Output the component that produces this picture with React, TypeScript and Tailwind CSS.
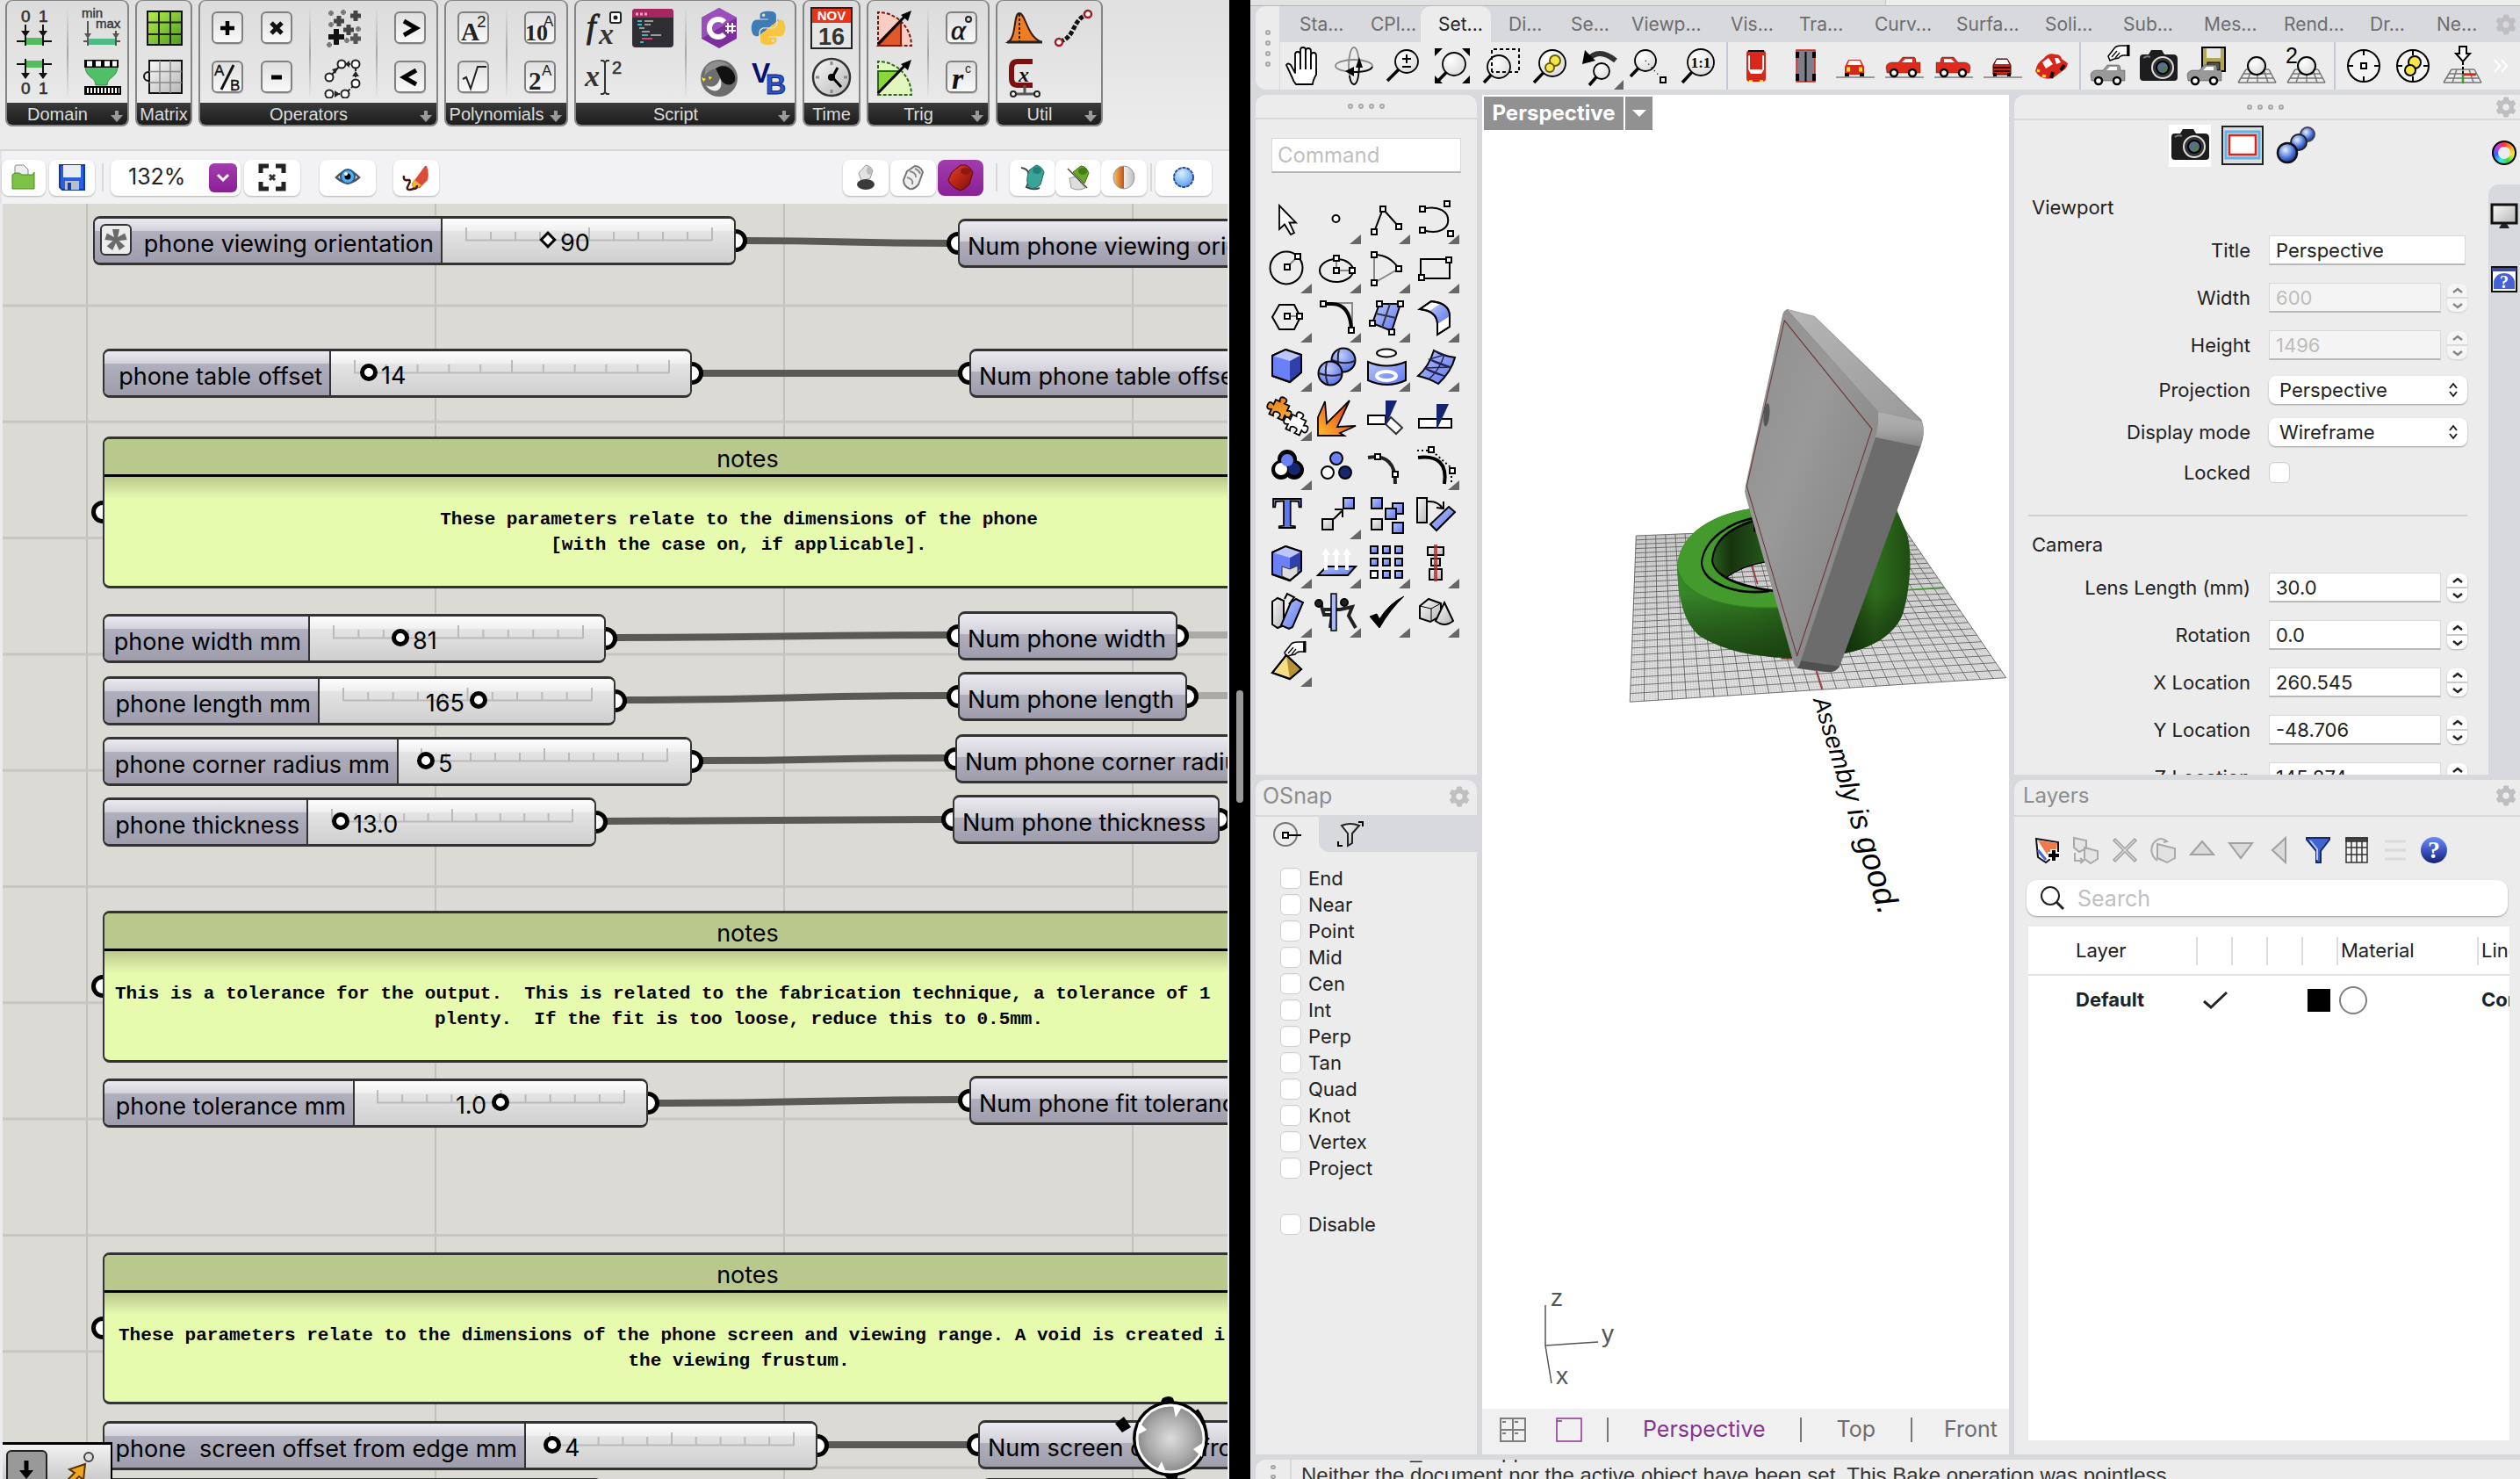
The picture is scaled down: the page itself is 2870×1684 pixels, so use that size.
import React from "react";
import { FaCog, FaPython } from "react-icons/fa";

type Kids = { children?: React.ReactNode };

const INTER = "font-['Inter','Liberation_Sans',sans-serif]";
const ARIAL = "font-['Liberation_Sans',Arial,sans-serif]";

/* ---------- drawing helpers ---------- */

function I48({ children }: Kids) {
  return (
    <svg viewBox="0 0 48 48" className="h-12 w-12" fill="none" aria-hidden="true">
      {children}
    </svg>
  );
}

function Sq({ x, y, s = 6 }: { x: number; y: number; s?: number }) {
  return <rect x={x - s / 2} y={y - s / 2} width={s} height={s} fill="#fff" stroke="#000" strokeWidth="2" />;
}

function Lens({ x, y, r, tx, ty }: { x: number; y: number; r: number; tx: number; ty: number }) {
  const d = Math.hypot(tx - x, ty - y);
  return (
    <g>
      <path d={`M${x + ((tx - x) * r) / d} ${y + ((ty - y) * r) / d}L${tx} ${ty}`} stroke="#000" strokeWidth="3.5" />
      <circle cx={x} cy={y} r={r} fill="url(#lensFill)" stroke="#000" strokeWidth="1.8" />
    </g>
  );
}

function Defs() {
  return (
    <svg className="absolute h-0 w-0" aria-hidden="true">
      <defs>
        <radialGradient id="lensFill" cx=".35" cy=".3" r=".9">
          <stop offset="0" stopColor="#fff" />
          <stop offset="1" stopColor="#d4d4d4" />
        </radialGradient>
        <linearGradient id="keyFill" x1="0" y1="0" x2="0" y2="1">
          <stop offset="0" stopColor="#dedede" />
          <stop offset="1" stopColor="#fafafa" />
        </linearGradient>
        <linearGradient id="blueFill" x1="0" y1="0" x2="1" y2="1">
          <stop offset="0" stopColor="#b9c6fa" />
          <stop offset="1" stopColor="#5b76ef" />
        </linearGradient>
        <linearGradient id="greyFill" x1="0" y1="0" x2="1" y2="1">
          <stop offset="0" stopColor="#fafafa" />
          <stop offset="1" stopColor="#b5b5b5" />
        </linearGradient>
        <linearGradient id="greenFill" x1="0" y1="0" x2="1" y2="1">
          <stop offset="0" stopColor="#b7f04a" />
          <stop offset="1" stopColor="#4c9c1c" />
        </linearGradient>
        <linearGradient id="flameFill" x1="1" y1="0" x2="0" y2="1">
          <stop offset="0" stopColor="#e2231a" />
          <stop offset="1" stopColor="#fbc02d" />
        </linearGradient>
        <linearGradient id="jigsawFill" x1="0" y1="0" x2="1" y2="1">
          <stop offset="0" stopColor="#e0741c" />
          <stop offset="1" stopColor="#fbb53a" />
        </linearGradient>
        <linearGradient id="pyFill" x1=".1" y1="0" x2=".9" y2="1">
          <stop offset=".5" stopColor="#3f7cb5" />
          <stop offset=".5" stopColor="#f9c440" />
        </linearGradient>
        <linearGradient id="orangeHalf" x1="0" y1="0" x2="1" y2="0">
          <stop offset="0" stopColor="#f6c16c" />
          <stop offset=".5" stopColor="#c25510" />
          <stop offset=".5" stopColor="#eee" />
          <stop offset="1" stopColor="#bbb" />
        </linearGradient>
        <radialGradient id="skyBall" cx=".4" cy=".3" r=".8">
          <stop offset="0" stopColor="#d9efff" />
          <stop offset="1" stopColor="#4f95e6" />
        </radialGradient>
        <radialGradient id="navyBall" cx=".4" cy=".35" r=".7">
          <stop offset="0" stopColor="#eaf2ff" />
          <stop offset=".6" stopColor="#4a74d8" />
          <stop offset="1" stopColor="#12257a" />
        </radialGradient>
        <radialGradient id="blueBall" cx=".4" cy=".3" r=".8">
          <stop offset="0" stopColor="#c3cefc" />
          <stop offset="1" stopColor="#4a66e2" />
        </radialGradient>
        <linearGradient id="helpFill" x1="0" y1="0" x2="0" y2="1">
          <stop offset="0" stopColor="#6b8bff" />
          <stop offset="1" stopColor="#12207c" />
        </linearGradient>
        <linearGradient id="redTin" x1="0" y1="0" x2="1" y2="1">
          <stop offset="0" stopColor="#e8402a" />
          <stop offset="1" stopColor="#7d0b04" />
        </linearGradient>
      </defs>
    </svg>
  );
}

/* ---------- ribbon icons ---------- */

function Key({ children }: Kids) {
  return (
    <I48>
      <rect x="8" y="8" width="34" height="35" rx="5" fill="#0002" />
      <rect x="7" y="6" width="34" height="35" rx="5" fill="url(#keyFill)" stroke="#808080" strokeWidth="2" />
      {children}
    </I48>
  );
}

function Bracket01({ flip = false }: { flip?: boolean }) {
  return (
    <I48>
      {flip ? (
        <g>
          <rect x="14" y="5" width="20" height="8" fill="#52bd5c" />
          <path d="M4 9h10M34 9h10M14 3v22M34 3v22" stroke="#111" strokeWidth="2" />
          <path d="M9 19h10l-5 7zM29 19h10l-5 7z" fill="#111" />
        </g>
      ) : (
        <g>
          <rect x="14" y="35" width="20" height="8" fill="#52bd5c" />
          <path d="M4 39h10M34 39h10M14 20v24M34 20v24" stroke="#111" strokeWidth="2" />
          <path d="M9 27h10l-5 7zM29 27h10l-5 7z" fill="#111" />
        </g>
      )}
      <text x="9" y={flip ? 43 : 17} fontSize="19" fontFamily="Liberation Sans" fill="#333" stroke="#333" strokeWidth=".6">0</text>
      <text x="29" y={flip ? 43 : 17} fontSize="19" fontFamily="Liberation Sans" fill="#333" stroke="#333" strokeWidth=".6">1</text>
    </I48>
  );
}

const plus = (x: number, y: number, s: number, w: number, c: string) => (
  <path key={`${x}-${y}`} d={`M${x - s} ${y}H${x + s}M${x} ${y - s}V${y + s}`} stroke={c} strokeWidth={w} />
);

const ribbonIcons = {
  toDomain: <Bracket01 />,
  fromDomain: <Bracket01 flip />,
  minmax: (
    <I48>
      <text x="2" y="12" fontSize="15" fontFamily="Liberation Sans" fill="#333" stroke="#333" strokeWidth=".4">min</text>
      <text x="18" y="24" fontSize="15" fontFamily="Liberation Sans" fill="#333" stroke="#333" strokeWidth=".4">max</text>
      <rect x="9" y="36" width="32" height="7" fill="#4fbb85" />
      <path d="M4 39h5M41 39h5M9 16v28M41 27v17" stroke="#555" strokeWidth="2" />
      <path d="M5 30h8l-4 6zM37 30h8l-4 6z" fill="#555" />
    </I48>
  ),
  remap: (
    <I48>
      <path d="M6 11h37c0 14-12 12-12 22H18c0-10-12-8-12-22z" fill="#4fbf68" stroke="#3b8b4b" />
      <rect x="5" y="4" width="39" height="9" fill="#000" />
      <path d="M8 8.500h6M18 8.500h6M28 8.500h6M37 8.500h5" stroke="#fff" strokeWidth="6" />
      <rect x="5" y="34" width="42" height="10" fill="#000" />
      <path d="M8 39h37" stroke="#fff" strokeWidth="6" strokeDasharray="2 2" />
    </I48>
  ),
  matrix: (
    <I48>
      <rect x="5" y="5" width="39" height="38" fill="url(#greenFill)" stroke="#111" strokeWidth="2" />
      <path d="M18 5v38M31 5v38M5 17.500h39M5 31h39" stroke="#222" strokeWidth="2" />
    </I48>
  ),
  matrixGrey: (
    <I48>
      <path d="M6 18a5 5 0 0 0 0 10" stroke="#111" strokeWidth="2" />
      <rect x="7" y="5" width="37" height="37" fill="url(#greyFill)" stroke="#111" strokeWidth="2" />
      <path d="M19 5v37M31 5v37M7 17.500h37M7 30h37" stroke="#888" strokeWidth="1.500" />
    </I48>
  ),
  add: <Key>{plus(24, 24, 8, 4.5, "#000")}</Key>,
  mul: <Key><path d="M18 18l12 12M30 18L18 30" stroke="#111" strokeWidth="5" /></Key>,
  sub: <Key><path d="M18 24h12" stroke="#000" strokeWidth="5" /></Key>,
  div: (
    <Key>
      <text x="9" y="22" fontSize="17" fontFamily="Liberation Sans" fill="#111" stroke="#111" strokeWidth=".4">A</text>
      <text x="27" y="39" fontSize="17" fontFamily="Liberation Sans" fill="#111" stroke="#111" strokeWidth=".4">B</text>
      <path d="M31 10L17 38" stroke="#111" strokeWidth="3" />
    </Key>
  ),
  mass: (
    <I48>
      {plus(16, 34, 9, 6, "#111")}
      {plus(38, 10, 6, 5, "#444")}
      {plus(19, 16, 6, 5, "#444")}
      {plus(30, 26, 6, 5, "#444")}
      {plus(38, 36, 6, 5, "#555")}
      {plus(10, 7, 3, 3, "#777")}
      {plus(24, 6, 3, 3, "#777")}
      {plus(28, 38, 3, 3, "#777")}
      {plus(8, 43, 3, 3, "#777")}
      {plus(10, 20, 3, 3, "#777")}
      {plus(41, 25, 3, 3, "#777")}
    </I48>
  ),
  series: (
    <I48>
      <path d="M8 43h18L38 31V9H22L8 24" stroke="#222" strokeWidth="2" strokeDasharray="5 2" />
      {[[8, 43], [26, 43], [38, 31], [38, 9], [22, 9], [8, 24]].map(([x, y]) => (
        <circle key={`${x}.${y}`} cx={x} cy={y} r="4.500" fill="#fff" stroke="#222" strokeWidth="2" />
      ))}
      <path d="M14 39l6 4-6 4zM34 23l4-6 4 6zM31 5l-5 4 5 4zM11 15l7-2-3 7z" fill="#222" />
    </I48>
  ),
  gt: <Key><path d="M17 16l14 8-14 8" stroke="#000" strokeWidth="5" /></Key>,
  lt: <Key><path d="M31 16l-14 8 14 8" stroke="#000" strokeWidth="5" /></Key>,
  sqr: (
    <Key>
      <text x="10" y="38" fontSize="29" fontWeight="bold" fontFamily="Liberation Serif" fill="#222">A</text>
      <text x="28" y="23" fontSize="19" fontFamily="Liberation Sans" fill="#222">2</text>
    </Key>
  ),
  sqrt: <Key><path d="M12 26l4-2 5 13 8-25h10" stroke="#222" strokeWidth="2" /></Key>,
  ten: (
    <Key>
      <text x="7" y="38" fontSize="26" fontWeight="bold" fontFamily="Liberation Serif" fill="#222">10</text>
      <text x="28" y="22" fontSize="17" fontFamily="Liberation Sans" fill="#222">A</text>
    </Key>
  ),
  two: (
    <Key>
      <text x="11" y="38" fontSize="29" fontWeight="bold" fontFamily="Liberation Serif" fill="#222">2</text>
      <text x="26" y="22" fontSize="17" fontFamily="Liberation Sans" fill="#222">A</text>
    </Key>
  ),
  fx: (
    <I48>
      <text x="5" y="35" fontSize="38" fontStyle="italic" fontFamily="Liberation Serif" fill="#222" stroke="#222">f</text>
      <text x="19" y="42" fontSize="34" fontStyle="italic" fontWeight="bold" fontFamily="Liberation Serif" fill="#333">x</text>
      <rect x="32" y="6" width="12" height="12" rx="2" fill="#fff" stroke="#222" strokeWidth="2" />
      <circle cx="38" cy="12" r="2.500" fill="#222" />
    </I48>
  ),
  x2: (
    <I48>
      <text x="3" y="34" fontSize="34" fontStyle="italic" fontWeight="bold" fontFamily="Liberation Serif" fill="#333">x</text>
      <text x="34" y="20" fontSize="20" fontFamily="Liberation Sans" fill="#333" stroke="#333" strokeWidth=".6">2</text>
      <path d="M21 5h3l2 2 2-2h3M26 6v36M21 43h3l2-2 2 2h3" stroke="#333" strokeWidth="2" />
    </I48>
  ),
  terminal: (
    <I48>
      <rect x="1" y="2" width="47" height="44" rx="4" fill="#2f2f33" />
      <path d="M1 12V6a4 4 0 0 1 4-4h39a4 4 0 0 1 4 4v6z" fill="#a8265e" />
      <path d="M5 8h3M10 8h3M15 8h3" stroke="#e9a6c4" strokeWidth="3" />
      <path d="M7 16h5M7 20h5M12 32h7M10 40h4" stroke="#3fb4c9" strokeWidth="2" />
      <path d="M15 16h10M15 20h7M12 28h9M22 32h12M9 24h6" stroke="#9a9a9a" strokeWidth="2" />
      <path d="M12 36h12" stroke="#d2487e" strokeWidth="2" />
    </I48>
  ),
  csharp: (
    <I48>
      <path d="M24 1l20 11v24L24 47 4 36V12z" fill="#7b2f9e" />
      <path d="M24 1l20 11L4 36V12z" fill="#9a4fbd" />
      <path d="M30 17a10 10 0 1 0 0 14" stroke="#fff" strokeWidth="6" />
      <path d="M34 18v12M39 18v12M31 22h12M31 27h12" stroke="#fff" strokeWidth="2" />
    </I48>
  ),
  python: (
    <span className="grid h-12 w-12 place-items-center">
      <FaPython className="h-11 w-11 [&_path]:fill-[url(#pyFill)]" aria-hidden="true" />
    </span>
  ),
  moon: (
    <I48>
      <circle cx="24" cy="25" r="21" fill="#6d6d6d" />
      <path d="M9 12q14-12 27-1-10-3-15 3-9 1-14 9z" fill="#8f8f8f" />
      <path d="M20 14a14 14 0 0 1 22 14c-4 8-14 4-16-2z" fill="#111" />
      <path d="M9 33c8 12 22 6 16-8-2 8-8 12-16 8z" fill="#eee" />
      <path d="M4 24l5 2-3 3zM12 23l4 1-3 3z" fill="#ffe81a" />
    </I48>
  ),
  vb: (
    <I48>
      <text x="5" y="30" fontSize="32" fontWeight="bold" fontFamily="Liberation Sans" fill="#07106b">V</text>
      <text x="21" y="43" fontSize="32" fontWeight="bold" fontFamily="Liberation Sans" fill="#2b56cc" stroke="#0d2577">B</text>
    </I48>
  ),
  calendar: (
    <I48>
      <rect x="1" y="1" width="46" height="46" fill="#e6e6e6" stroke="#222" strokeWidth="2" />
      <rect x="2" y="2" width="44" height="16" fill="#e8341b" />
      <text x="24" y="15" fontSize="15" fontWeight="bold" textAnchor="middle" fontFamily="Liberation Sans" fill="#fff">NOV</text>
      <text x="24" y="43" fontSize="27" textAnchor="middle" fontWeight="bold" fontFamily="Liberation Sans" fill="#333">16</text>
    </I48>
  ),
  clock: (
    <I48>
      <circle cx="24" cy="24" r="21" fill="url(#greyFill)" stroke="#333" strokeWidth="2.500" />
      <path d="M24 6v4M24 38v4M6 24h4M38 24h4" stroke="#888" strokeWidth="3" />
      <path d="M31 13l-6 11 10 11" stroke="#000" strokeWidth="3" />
      <circle cx="24" cy="24" r="4" fill="#000" />
    </I48>
  ),
  sine: (
    <I48>
      <path d="M5 44V6a38 38 0 0 1 38 38z" fill="#f9cdc4" stroke="#7d1710" strokeWidth="2" strokeDasharray="4 2" />
      <path d="M5 44h26V16z" fill="#e0592a" stroke="#7d1710" strokeWidth="2" />
      <path d="M5 42L38 8" stroke="#000" strokeWidth="3" />
      <path d="M43 4l-4 12-8-7z" fill="#000" />
    </I48>
  ),
  cosine: (
    <I48>
      <path d="M5 44V6a38 38 0 0 1 38 38z" fill="#e2f7bd" stroke="#2a6a12" strokeWidth="2" strokeDasharray="4 2" />
      <path d="M5 42V17h24z" fill="#8cd63a" stroke="#2a6a12" strokeWidth="2" />
      <path d="M5 42L38 8" stroke="#000" strokeWidth="3" />
      <path d="M43 4l-4 12-8-7z" fill="#000" />
    </I48>
  ),
  alpha: (
    <Key>
      <text x="12" y="37" fontSize="32" fontStyle="italic" fontFamily="Liberation Serif" fill="#111" stroke="#111" strokeWidth=".6">α</text>
      <circle cx="32" cy="14" r="3" stroke="#222" strokeWidth="2" />
    </Key>
  ),
  radian: (
    <Key>
      <text x="13" y="37" fontSize="34" fontStyle="italic" fontWeight="bold" fontFamily="Liberation Serif" fill="#111">r</text>
      <text x="28" y="19" fontSize="14" fontFamily="Liberation Sans" fill="#222">c</text>
    </Key>
  ),
  gauss: (
    <I48>
      <path d="M5 40C15 34 11 7 18 7s8 26 25 33z" fill="#ef7d22" stroke="#3a1a08" strokeWidth="2" />
      <path d="M4 40h40" stroke="#222" strokeWidth="3" />
      <path d="M18 8v31" stroke="#222" strokeWidth="2" strokeDasharray="3 2" />
    </I48>
  ),
  interp: (
    <I48>
      <path d="M8 39C26 36 22 12 40 9" stroke="#111" strokeWidth="5" strokeDasharray="5 2" />
      <circle cx="7" cy="40" r="4" fill="#fff" stroke="#9c1f28" strokeWidth="2.500" />
      <circle cx="40" cy="8" r="4" fill="#fff" stroke="#9c1f28" strokeWidth="2.500" />
    </I48>
  ),
  clamp: (
    <I48>
      <path d="M33 6H16Q9 6 9 14v11q0 8 7 8h17" stroke="#7c0f10" strokeWidth="6" />
      <text x="17" y="29" fontSize="24" fontStyle="italic" fontWeight="bold" fontFamily="Liberation Serif" fill="#111">x</text>
      <path d="M24 33v9M12 43h26" stroke="#555" strokeWidth="3" />
      <circle cx="11" cy="43" r="3" fill="#fff" stroke="#222" strokeWidth="2" />
      <circle cx="38" cy="43" r="3" fill="#fff" stroke="#222" strokeWidth="2" />
    </I48>
  ),
};

type IconName = keyof typeof ribbonIcons;

/* Each ribbon group is a list of columns; null draws a divider. */
const ribbon: { name: string; more: boolean; width: string; cols: (IconName[] | null)[] }[] = [
  { name: "Domain", more: true, width: "w-[141px]", cols: [["toDomain", "fromDomain"], null, ["minmax", "remap"]] },
  { name: "Matrix", more: false, width: "w-[65px]", cols: [["matrix", "matrixGrey"]] },
  { name: "Operators", more: true, width: "w-[273px]", cols: [["add", "div"], ["mul", "sub"], null, ["mass", "series"], null, ["gt", "lt"]] },
  { name: "Polynomials", more: true, width: "w-[141px]", cols: [["sqr", "sqrt"], null, ["ten", "two"]] },
  { name: "Script", more: true, width: "w-[253px]", cols: [["fx", "x2"], ["terminal"], null, ["csharp", "moon"], ["python", "vb"]] },
  { name: "Time", more: false, width: "w-[66px]", cols: [["calendar", "clock"]] },
  { name: "Trig", more: true, width: "w-[140px]", cols: [["sine", "cosine"], null, ["alpha", "radian"]] },
  { name: "Util", more: true, width: "w-[122px]", cols: [["gauss", "clamp"], ["interp"]] },
];

function Ribbon() {
  return (
    <div className="h-[172px] shrink-0 border-b-2 border-[#d6d7d9] bg-[#ebebeb]">
      <div className="flex h-36 gap-[7px] rounded-br-xl bg-linear-to-b from-[#e0e0e0] to-[#ebebeb] pl-1.5">
        {ribbon.map((g) => (
          <section
            key={g.name}
            className={`${g.width} flex shrink-0 flex-col overflow-hidden rounded-lg border-2 border-t border-[#858585] bg-linear-to-b from-[#dcdcdc] to-[#ececec]`}
          >
            <div className="flex h-[116px] justify-center pt-[7px]">
              {g.cols.map((col, i) =>
                col ? (
                  <div key={i} className="flex w-14 shrink-0 flex-col items-center gap-2">
                    {col.map((n) => (
                      <button key={n} type="button" aria-label={n}>
                        {ribbonIcons[n]}
                      </button>
                    ))}
                  </div>
                ) : (
                  <div key={i} className="flex w-5 shrink-0 justify-center">
                    <div className="h-[104px] w-0.5 bg-linear-to-b from-transparent via-[#a8a8a8] to-transparent" />
                  </div>
                )
              )}
            </div>
            <div className={`${ARIAL} flex flex-1 items-center bg-linear-to-b from-[#3b3b3b] to-[#1c1c1c] text-[20px] leading-none text-[#dcdcdc]`}>
              <span className="flex-1 text-center">{g.name}</span>
              {g.more && (
                <svg viewBox="0 0 20 20" className="mt-1 mr-0.5 h-5 w-5 shrink-0" aria-hidden="true">
                  <path d="M8 4h4v5h5l-7 8-7-8h5z" fill="#9a9a9a" />
                </svg>
              )}
            </div>
          </section>
        ))}
      </div>
    </div>
  );
}

/* ---------- canvas toolbar ---------- */

function ToolBtn({ label, className = "w-[52px]", children }: { label: string; className?: string } & Kids) {
  return (
    <button
      type="button"
      aria-label={label}
      className={`${className} grid h-[41px] shrink-0 place-items-center rounded-lg bg-white shadow-[0_1px_2px_#0004]`}
    >
      <svg viewBox="0 0 32 32" className="h-8 w-8" fill="none" aria-hidden="true">
        {children}
      </svg>
    </button>
  );
}

const can = "M9 9l9-6q6 0 9 7l-5 14q-5 6-10 5Q5 26 5 19z";

function CanvasToolbar() {
  return (
    <div className="flex h-[60px] shrink-0 items-center gap-1 border-l-2 border-[#e4e4e8] bg-[#f2f2f4]">
      <ToolBtn label="Open" className="w-[50px]">
        <path d="M6 4q0-2 2-2h8l5 5v9H6z" fill="#eee" stroke="#888" />
        <path d="M3 13l3-2h5l3 2h12l2-3v19H3z" fill="#7cc247" stroke="#4a8a22" />
      </ToolBtn>
      <ToolBtn label="Save">
        <path d="M2 2h28v28H5l-3-3z" fill="#2a5fe0" stroke="#123a9c" strokeWidth="2" />
        <rect x="6" y="2" width="20" height="14" fill="#e9eef5" />
        <rect x="8" y="20" width="16" height="10" fill="#b8bfc9" />
        <rect x="11" y="22" width="4" height="8" fill="#1b3f9f" />
      </ToolBtn>
      <span className="mx-1 h-8 w-0.5 bg-[#d9d9dc]" />
      <div className={`${INTER} relative h-[41px] w-[148px] rounded-lg bg-white shadow-[0_1px_2px_#0004]`}>
        <select aria-label="Zoom" className="h-full w-full appearance-none pl-5 text-[25px] text-[#222]">
          <option>132%</option>
        </select>
        <span className="pointer-events-none absolute top-1 right-1 grid h-[33px] w-8 place-items-center rounded-md bg-linear-to-b from-[#a23cad] to-[#8a1f96]">
          <svg viewBox="0 0 16 16" className="h-4 w-4" fill="none" aria-hidden="true">
            <path d="M2 5l6 6 6-6" stroke="#fff" strokeWidth="3" />
          </svg>
        </span>
      </div>
      <ToolBtn label="Zoom extents" className="w-16">
        <path d="M3 11V3h9M20 3h9v8M29 21v8h-9M12 29H3v-8" stroke="#222" strokeWidth="5" />
        <path d="M13 13l6 6M19 13l-6 6" stroke="#333" strokeWidth="3" />
      </ToolBtn>
      <ToolBtn label="Named views" className="mr-4 ml-[18px] w-16">
        <path d="M3 16Q16 2 29 16 16 28 3 16z" fill="#eee" stroke="#555" strokeWidth="2.500" />
        <circle cx="16" cy="15" r="8" fill="#55aef0" stroke="#245a8c" strokeWidth="2" />
        <circle cx="16" cy="15" r="3.500" fill="#000" />
        <circle cx="14" cy="12" r="2" fill="#fff" />
      </ToolBtn>
      <ToolBtn label="Sketch">
        <path d="M15 18L26 3l2 0q3 9 1 16l-9 9q-5 1-8 0l-1-5z" fill="#dd4b3a" />
        <path d="M13 18l9 7-6 4-5-3z" fill="#f0b72c" />
        <path d="M2 14q-1 6 4 5t1 6 6 4q4 0 4-4" stroke="#4a1410" strokeWidth="2.500" />
      </ToolBtn>
      <div className="ml-auto flex items-center gap-0.5 pr-5">
        <ToolBtn label="No preview">
          <path d="M8 11l8-9q5 0 8 6l-3 9-10 3z" fill="#e2e2e2" stroke="#999" />
          <ellipse cx="20" cy="8" rx="3" ry="5" fill="#bbb" />
          <ellipse cx="16" cy="24" rx="10" ry="6" fill="#3a3a3a" />
        </ToolBtn>
        <ToolBtn label="Wireframe preview">
          <path d={can} fill="#eee" stroke="#777" strokeWidth="2" />
          <path d="M12 9q8 2 7 7M9 16q8 2 6 8M18 6q5 2 6 6" stroke="#888" strokeWidth="2" />
        </ToolBtn>
        <button type="button" aria-label="Shaded preview" className="grid h-[41px] w-[52px] place-items-center rounded-lg bg-linear-to-b from-[#a23cad] to-[#8a1f96]">
          <svg viewBox="0 0 32 32" className="h-8 w-8" fill="none" aria-hidden="true">
            <path d="M6 10L16 2h6q5 2 8 8l-4 14q-6 6-10 7Q5 27 2 19z" fill="url(#redTin)" stroke="#5a0a05" />
            <ellipse cx="22" cy="9" rx="6" ry="4" fill="#8e1a0f" />
          </svg>
        </button>
        <span className="mx-3 h-8 w-0.5 bg-[#d9d9dc]" />
        <div className="flex">
          <ToolBtn label="Selected preview">
            <path d="M3 5q8 1 9 8t-3 14q8 4 15 1" stroke="#444" strokeWidth="2" />
            <path d="M12 8l8-6q6 1 9 8l-4 14q-6 6-12 4-6-6-1-20z" fill="#3aa39a" stroke="#1d6a64" />
            <ellipse cx="21" cy="8" rx="5" ry="4" fill="#22807a" />
          </ToolBtn>
          <ToolBtn label="Document preview">
            <path d="M6 17l7-2 11 13q-8 4-16 0z" fill="#ddd" stroke="#999" />
            <path d="M10 10l9-7q6 0 9 8l-5 12z" fill="#6aa72b" stroke="#3d6f11" />
            <ellipse cx="21" cy="9" rx="5" ry="4" fill="#457c14" />
            <path d="M4 6l22 22" stroke="#444" strokeWidth="1.500" />
          </ToolBtn>
          <ToolBtn label="Preview settings">
            <ellipse cx="16" cy="16" rx="12" ry="13" fill="url(#orangeHalf)" stroke="#999" />
          </ToolBtn>
        </div>
        <span className="mx-0.5 h-8 w-0.5 bg-[#d9d9dc]" />
        <ToolBtn label="Mesh quality" className="w-16">
          <circle cx="16" cy="16" r="11" fill="url(#skyBall)" stroke="#2b4b9c" strokeWidth="2" strokeDasharray="4 1" />
        </ToolBtn>
      </div>
    </div>
  );
}

/* ---------- node canvas ---------- */

type SliderNode = {
  id: string;
  label: string;
  value: string;
  x: number;
  y: number;
  w: number;
  split: number;
  t0: number;
  t1: number;
  knob: number;
  left?: boolean;
  diamond?: boolean;
};

/* Canvas coordinates, measured from the top-left of the canvas. */
const sliders: SliderNode[] = [
  { id: "view", label: "phone viewing orientation", value: "90", x: 106, y: 14, w: 732, split: 398, t0: 530, t1: 811, knob: 624, diamond: true },
  { id: "table", label: "phone table offset", value: "14", x: 117, y: 165, w: 671, split: 260, t0: 403, t1: 762, knob: 420 },
  { id: "width", label: "phone width mm", value: "81", x: 117, y: 467, w: 573, split: 236, t0: 379, t1: 664, knob: 456 },
  { id: "length", label: "phone length mm", value: "165", x: 117, y: 538, w: 584, split: 247, t0: 390, t1: 674, knob: 545, left: true },
  { id: "corner", label: "phone corner radius mm", value: "5", x: 117, y: 607, w: 671, split: 337, t0: 479, t1: 760, knob: 485 },
  { id: "thick", label: "phone thickness", value: "13.0", x: 117, y: 676, w: 562, split: 234, t0: 377, t1: 652, knob: 388 },
  { id: "tol", label: "phone tolerance mm", value: "1.0", x: 117, y: 996, w: 621, split: 287, t0: 429, t1: 711, knob: 570, left: true },
  { id: "edge", label: "phone  screen offset from edge mm", value: "4", x: 117, y: 1386, w: 814, split: 482, t0: 625, t1: 904, knob: 629 },
];

const params = [
  { label: "Num phone viewing orientation", x: 1091, y: 17, w: 420 },
  { label: "Num phone table offset", x: 1104, y: 165, w: 400 },
  { label: "Num phone width", x: 1091, y: 464, w: 250 },
  { label: "Num phone length", x: 1091, y: 533, w: 261 },
  { label: "Num phone corner radius", x: 1088, y: 604, w: 400 },
  { label: "Num phone thickness", x: 1085, y: 673, w: 304 },
  { label: "Num phone fit tolerance", x: 1104, y: 993, w: 400 },
  { label: "Num screen offset from edge", x: 1114, y: 1385, w: 400 },
];

const notes = [
  {
    y: 265,
    first: "pr-5 text-center",
    lines: ["These parameters relate to the dimensions of the phone", "[with the case on, if applicable]."],
  },
  {
    y: 805,
    first: "pl-3",
    lines: [
      "This is a tolerance for the output.  This is related to the fabrication technique, a tolerance of 1",
      "plenty.  If the fit is too loose, reduce this to 0.5mm.",
    ],
  },
  {
    y: 1194,
    first: "pl-4",
    lines: [
      "These parameters relate to the dimensions of the phone screen and viewing range. A void is created i",
      "the viewing frustum.",
    ],
  },
];

const wires: [number, number, number, number][] = [
  [850, 42, 1080, 45],
  [800, 193, 1094, 193],
  [702, 494, 1080, 491],
  [713, 565, 1080, 560],
  [800, 634, 1078, 631],
  [691, 703, 1075, 701],
  [750, 1024, 1094, 1020],
  [943, 1413, 1104, 1413],
];

function Grip({ side }: { side: "left" | "right" }) {
  return (
    <span
      className={`${side === "left" ? "-left-[13px]" : "-right-[13px]"} absolute top-[15px] h-[26px] w-[26px] rounded-full border-5 border-black bg-white`}
    />
  );
}

const THUMB =
  "appearance-none bg-transparent [&::-webkit-slider-thumb]:appearance-none [&::-webkit-slider-thumb]:bg-white [&::-webkit-slider-thumb]:border-black";
const ROUND =
  "[&::-webkit-slider-thumb]:h-[20px] [&::-webkit-slider-thumb]:w-[20px] [&::-webkit-slider-thumb]:rounded-full [&::-webkit-slider-thumb]:border-5";
const DIAMOND =
  "[&::-webkit-slider-thumb]:h-[14px] [&::-webkit-slider-thumb]:w-[14px] [&::-webkit-slider-thumb]:rotate-45 [&::-webkit-slider-thumb]:border-3";

function Slider({ s }: { s: SliderNode }) {
  const tw = s.t1 - s.t0;
  const off = s.t0 - s.x - s.split;
  const half = s.diamond ? 7 : 10;
  const kx = s.knob - s.x - s.split;
  return (
    <div className="absolute h-14" style={{ left: s.x, top: s.y, width: s.w }}>
      <Grip side="right" />
      <div className="relative flex h-full overflow-hidden rounded-lg border-3 border-x-2 border-[#333]">
        <label
          htmlFor={s.id}
          style={{ width: s.split - 2 }}
          className="flex shrink-0 items-center justify-end border-r-2 border-[#333] bg-[linear-gradient(#ebeaf0,#d3d2da_28%,#b0afbd_29%,#9f9dab)] pt-1.5 pr-2 text-[27px] leading-none whitespace-pre"
        >
          {s.diamond && (
            <span className="absolute top-1.5 left-1.5 grid h-9 w-9 place-items-center rounded-md border-2 border-[#333] bg-[#ececec]">
              <svg viewBox="0 0 28 28" className="h-7 w-7" aria-hidden="true">
                {[0, 72, 144, 216, 288].map((a) => (
                  <path key={a} d="M12.500 14L10 2h8l-2.500 12z" fill="#6a6a6a" transform={`rotate(${a} 14 14)`} />
                ))}
              </svg>
            </span>
          )}
          {s.label}
        </label>
        <div className="relative flex-1 bg-[linear-gradient(#fdfdfd,#efefef_28%,#e4e4e4_29%,#cfcfcf)]">
          <svg className="absolute top-2.5 h-4" style={{ left: off, width: tw + 2 }} aria-hidden="true">
            <path
              d={`M0 14.5H${tw}` + Array.from({ length: 11 }, (_, i) => `M${1 + (i * (tw - 1)) / 10} ${i % 5 ? 5 : 0}V15`).join("")}
              stroke="#bababa"
              strokeWidth="2"
            />
          </svg>
          <span
            className={`absolute top-3.5 text-[27px] leading-7 ${s.left ? "-translate-x-full" : ""}`}
            style={{ left: s.left ? kx - 16 : kx + 14 }}
          >
            {s.value}
          </span>
          <input
            id={s.id}
            type="range"
            min={0}
            max={1000}
            defaultValue={Math.round(((s.knob - s.t0) / tw) * 1000)}
            className={`absolute top-3.5 h-5 ${THUMB} ${s.diamond ? DIAMOND : ROUND}`}
            style={{ left: off - half, width: tw + half * 2 }}
          />
        </div>
      </div>
    </div>
  );
}

function Compass() {
  return (
    <svg viewBox="0 0 120 100" className="absolute top-[1356px] left-[1264px] h-[100px] w-[120px]" aria-hidden="true">
      <defs>
        <radialGradient id="compassFill">
          <stop offset="0" stopColor="#ddd" />
          <stop offset=".7" stopColor="#a8a8a8" />
          <stop offset="1" stopColor="#8a8a8a" />
        </radialGradient>
      </defs>
      <circle cx="69" cy="50" r="43" fill="#000" />
      <path d="M56 12l4-8q8-4 12 0l2 6zM60 90l8 8h8l2-8zM6 33l10-8 8 12-10 6z" />
      <path d="M98 18q12 16 10 36" stroke="#000" strokeWidth="6" fill="none" />
      <circle cx="69" cy="50" r="38" fill="url(#compassFill)" stroke="#fff" strokeWidth="3" />
      <path d="M72 12l3 14 7-12zM107 54l-12 8 10 9zM64 88l-5-12-5 9zM31 46l11-6-9-9z" fill="#fff" />
    </svg>
  );
}

function Canvas() {
  const gy = Array.from({ length: 11 }, (_, i) => 116 + i * 132.3);
  return (
    <div className={`${INTER} relative flex-1 overflow-hidden border-r-2 border-l-3 border-[#ececf0] bg-[#dcdad4] text-black`}>
      <div className="absolute inset-0 -left-[3px]">
        <svg className="absolute inset-0 h-full w-full" aria-hidden="true">
          {[99, 496, 893, 1290].map((x) => (
            <path key={x} d={`M${x} 0V1600`} stroke="#c3c1bb" strokeWidth="2" />
          ))}
          {gy.map((y) => (
            <path key={y} d={`M0 ${y}H1400`} stroke="#c8c6c0" strokeWidth="3" />
          ))}
          {wires.map(([a, b, c, d]) => (
            <path key={b} d={`M${a} ${b}C${(a + c) / 2} ${b} ${(a + c) / 2} ${d} ${c} ${d}`} stroke="#5a5955" strokeWidth="8" fill="none" />
          ))}
          <path d="M1350 491H1400M1360 560H1400" stroke="#abaaa5" strokeWidth="8" />
        </svg>
        {sliders.map((s) => (
          <Slider key={s.id} s={s} />
        ))}
        {params.map((p) => (
          <div key={p.label} className="absolute h-14" style={{ left: p.x, top: p.y, width: p.w }}>
            <Grip side="left" />
            <Grip side="right" />
            <div className="relative flex h-full items-center rounded-lg border-3 border-x-2 border-[#333] bg-[linear-gradient(#ebeaf0,#d3d2da_45%,#b0afbd_46%,#9f9dab)] pt-1.5 pl-[9px] text-[27px] leading-none whitespace-nowrap">
              {p.label}
            </div>
          </div>
        ))}
        {notes.map((n) => (
          <div key={n.y} className="absolute left-[117px] h-[173px] w-[1469px]" style={{ top: n.y }}>
            <span className="absolute top-[73px] -left-[13px] h-[26px] w-[26px] rounded-full border-5 border-black bg-white" />
            <div className="relative flex h-full flex-col overflow-hidden rounded-lg border-3 border-x-2 border-[#333] bg-[#e6fbae]">
              <div className="h-[43px] shrink-0 border-b-3 border-black bg-[#b9c98d] pt-[7px] text-center text-[27px] leading-8">notes</div>
              <div className="flex-1 bg-linear-to-b from-[#b9c98d] to-transparent to-20% pt-[34px] font-['Liberation_Mono',monospace] text-[21px] leading-[29px] font-bold whitespace-pre">
                <p className={n.first}>{n.lines[0]}</p>
                <p className="pr-5 text-center">{n.lines[1]}</p>
              </div>
            </div>
          </div>
        ))}
        <span className="absolute top-[1451px] left-[117px] h-4 w-[569px] rounded-lg border-2 border-[#333] bg-[#ddd]" />
        <span className="absolute top-[1451px] left-[1118px] h-4 w-[237px] rounded-lg border-2 border-[#333] bg-[#ddd]" />
        <Compass />
        <div className="absolute top-[1410px] left-[3px] flex h-[60px] w-[125px] items-start gap-2 border-t-3 border-r-2 border-black bg-linear-to-b from-[#f2f2f2] to-[#bbb] pt-1.5 pl-1">
          <svg viewBox="0 0 48 48" className="h-12 w-12" aria-hidden="true">
            <rect x="1" y="1" width="45" height="46" rx="5" fill="#999" stroke="#222" strokeWidth="2" />
            <path d="M23 12v14" stroke="#000" strokeWidth="5" />
            <path d="M15 23h16l-8 10z" />
            <path d="M8 35h30" stroke="#000" strokeWidth="3" />
          </svg>
          <svg viewBox="0 0 48 48" className="h-12 w-12" aria-hidden="true">
            <circle cx="38" cy="8" r="5" fill="#ddd" stroke="#444" strokeWidth="2" />
            <path d="M10 38l12-12-6-4 18-6-2 18-5-4-12 12z" fill="#f2a51e" stroke="#5a3300" strokeWidth="2" />
            <circle cx="8" cy="40" r="4" fill="#ddd" stroke="#444" strokeWidth="2" />
          </svg>
        </div>
      </div>
    </div>
  );
}

/* ---------- modelling window: toolbar ---------- */

function Car({ x = 0, y = 0, c = "#e02a1c", flip = false }: { x?: number; y?: number; c?: string; flip?: boolean }) {
  return (
    <g transform={`translate(${flip ? 48 + x : x} ${y})${flip ? " scale(-1 1)" : ""}`}>
      <path d="M4 24q0-5 6-6h8l5-6h13q2 0 2 6h5v12H5z" fill={c} stroke="#0005" />
      <path d="M22 18l4-4h8v4z" fill="#fff" />
      <circle cx="13" cy="30" r="4" fill="#fff" stroke="#000" strokeWidth="2.500" />
      <circle cx="34" cy="30" r="4" fill="#fff" stroke="#000" strokeWidth="2.500" />
    </g>
  );
}

const ground = <path d="M3 37h44" stroke="#999" strokeWidth="2" />;

const planeGrid = (
  <path d="M12 28h26M9 33h32M6 38h37M3 43h43M12 28L3 43M18 28l-5 15M25 28v15M32 28l5 15M38 28l8 15" stroke="#777" strokeWidth="1.500" />
);

const hand = (
  <g fill="#fff" stroke="#000" strokeWidth="1.800" strokeLinejoin="round" strokeLinecap="round">
    <rect x="13" y="8" width="6" height="26" rx="3" />
    <rect x="19" y="3" width="6" height="30" rx="3" />
    <rect x="25" y="4" width="6" height="30" rx="3" />
    <rect x="31" y="9" width="6" height="26" rx="3" />
    <path d="M13 28v4L8 23q-3-3-5 0l7 15q1 4 4 7h19q0-4 4-11v-6" />
  </g>
);

const pointer = (
  <g transform="translate(22 0)">
    <path d="M1 13l7-9q2-3 8-3h7v11h-5q-4 1-5 3l-5 1-5 2z" fill="#fff" stroke="#000" strokeWidth="1.500" />
    <path d="M5 14l6-7M9 15l5-6" stroke="#000" strokeWidth="1.200" />
    <path d="M24 0v13" stroke="#000" strokeWidth="3" />
  </g>
);

const target = (
  <g>
    <circle cx="24" cy="24" r="18" stroke="#000" strokeWidth="2" fill="#f4f4f4" />
    <path d="M24 6v6M24 36v6M6 24h6M36 24h6" stroke="#000" strokeWidth="2" />
  </g>
);

const camera = (
  <g>
    <path d="M3 14q0-4 4-4h6l3-5h12l3 5h10q5 0 5 5v21q0 4-4 4H7q-4 0-4-4z" fill="#1d1d1f" />
    <circle cx="29" cy="25" r="12" fill="#333" stroke="#ddd" strokeWidth="2" />
    <circle cx="29" cy="25" r="7" fill="#5a6f8f" stroke="#000" strokeWidth="2" />
    <circle cx="31" cy="27" r="3" fill="#4e7d47" />
    <path d="M7 14q4-3 8-1" stroke="#777" strokeWidth="2" />
  </g>
);

type Tool = { name: string; art: React.ReactNode };
const toolbar: (Tool | null)[] = [
  { name: "Pan", art: hand },
  {
    name: "Rotate view",
    art: (
      <g strokeWidth="1.800">
        <ellipse cx="24" cy="24" rx="6" ry="21" stroke="#888" />
        <ellipse cx="24" cy="24" rx="21" ry="7" stroke="#888" />
        <path d="M30 18q0 27-6 27-4 0-5-10M45 25q-2 6-21 6" stroke="#000" />
        <path d="M26 26l4-12 4 12zM24 25v11l-10-6z" fill="#000" />
      </g>
    ),
  },
  { name: "Zoom dynamic", art: <g><Lens x={28} y={19} r={13} tx={6} ty={41} /><path d="M28 11v10M23 16h10M23 25h10" stroke="#000" strokeWidth="2" /></g> },
  { name: "Zoom extents", art: <g><Lens x={26} y={22} r={13} tx={8} ty={41} /><path d="M4 4h9l-9 9zM44 4h-9l9 9zM4 44h9l-9-9zM44 44h-9l9-9z" fill="#000" /></g> },
  { name: "Zoom window", art: <g><Lens x={21} y={25} r={13} tx={4} ty={43} /><path d="M13 31V5h31v26H13" stroke="#000" strokeWidth="2" strokeDasharray="4 3" /></g> },
  { name: "Zoom selected", art: <g><Lens x={26} y={21} r={15} tx={5} ty={43} /><circle cx="29" cy="18" r="6" fill="#f7e64a" stroke="#665c00" strokeWidth="2" /><circle cx="23" cy="26" r="5" fill="#f7e64a" stroke="#665c00" strokeWidth="2" /></g> },
  { name: "Undo view", art: <g><Lens x={26} y={30} r={9} tx={12} ty={46} /><path d="M10 18Q22 2 42 18" stroke="#333" strokeWidth="6" /><path d="M4 22l3-16 12 12z" fill="#000" /><path d="M51 40v11H40z" fill="#666" /></g> },
  { name: "Zoom target", art: <g><Lens x={20} y={18} r={12} tx={3} ty={36} /><path d="M20 18l18 20" stroke="#000" strokeWidth="1.500" strokeDasharray="1 4" /><Sq x={40} y={40} s={6} /></g> },
  { name: "Zoom 1 to 1", art: <g><Lens x={27} y={20} r={15} tx={6} ty={43} /><text x="27" y="26" fontSize="17" fontWeight="bold" textAnchor="middle" fontFamily="Liberation Serif" fill="#000">1:1</text></g> },
  null,
  { name: "Top view", art: <g><rect x="13" y="6" width="22" height="36" rx="4" fill="#d8261b" /><path d="M15 7h18" stroke="#111" strokeWidth="2" /><path d="M16 12v16M32 12v16" stroke="#fff" strokeWidth="2" /><path d="M15 28h18l-3 5H18z" fill="#fff" /><path d="M16 41h4M28 41h4" stroke="#ffe21a" strokeWidth="2" /></g> },
  { name: "Bottom view", art: <g><rect x="14" y="6" width="21" height="36" fill="#7e7f8d" stroke="#d8261b" strokeWidth="1.500" /><path d="M24.500 8v34" stroke="#000" strokeWidth="2" /><path d="M15 8v7M34 8v7M15 33v8M34 33v8" stroke="#000" strokeWidth="4" /></g> },
  { name: "Front view", art: <g>{ground}<path d="M17 17h14l4 8v9H13v-9z" fill="#d8261b" /><path d="M18 18h12l2 5H16z" fill="#fff" /><path d="M15 28h4M29 28h4" stroke="#ffe21a" strokeWidth="5" /><path d="M13 34h5M30 34h5" stroke="#000" strokeWidth="4" /></g> },
  { name: "Right view", art: <g>{ground}<Car y={2} /></g> },
  { name: "Left view", art: <g>{ground}<Car y={2} flip /></g> },
  { name: "Back view", art: <g>{ground}<path d="M18 16h12l4 7v11H14V23z" fill="#c9241a" stroke="#3a0805" /><path d="M18 17h12l2 5H16z" fill="#fff" /><path d="M14 26h20M15 30h18" stroke="#3a0805" strokeWidth="2" /><path d="M14 34h4M30 34h4" stroke="#000" strokeWidth="4" /></g> },
  { name: "Perspective view", art: <g transform="translate(1 0)"><path d="M5 30q2-10 9-14Q20 8 28 11q6 0 7 5l7 5q-1 6-5 8l-12 9q-14 3-20-8z" fill="#d8261b" /><path d="M13 20l7-5 5 7-8 5zM27 15h4l3 5-5 2z" fill="#fff" /><path d="M34 29l4-6M23 38l2-7" stroke="#111" strokeWidth="4" /><path d="M7 29l3 1M13 35l4 1" stroke="#ffe21a" strokeWidth="3" /></g> },
  null,
  { name: "Named view", art: <g>{pointer}<Car y={11} x={-1} c="#999" /></g> },
  { name: "Set camera", art: <g transform="translate(0 1)">{camera}</g> },
  { name: "Save view", art: <g><rect x="18" y="3" width="26" height="27" fill="#b5a653" stroke="#000" strokeWidth="2" /><rect x="23" y="4" width="16" height="11" fill="#e8e8e8" /><rect x="24" y="20" width="14" height="9" fill="#555" stroke="#000" /><Car y={11} x={-3} c="#999" /></g> },
  { name: "Plane", art: <g>{planeGrid}<circle cx="24" cy="24" r="10" fill="url(#lensFill)" stroke="#000" strokeWidth="2" /></g> },
  { name: "Plane two", art: <g>{planeGrid}<circle cx="25" cy="24" r="10" fill="url(#lensFill)" stroke="#000" strokeWidth="2" /><text x="1" y="21" fontSize="25" fontFamily="Liberation Sans" fill="#000">2</text></g> },
  null,
  { name: "Target", art: <g>{target}<Sq x={24} y={24} s={6} /></g> },
  { name: "Target selected", art: <g>{target}<circle cx="26" cy="20" r="7" fill="#f7e64a" stroke="#000" strokeWidth="2" /><circle cx="21" cy="29" r="6" fill="#f7e64a" stroke="#000" strokeWidth="2" /></g> },
  { name: "Drop plane", art: <g>{planeGrid}<path d="M25 34h15" stroke="#d8261b" strokeWidth="2.500" /><path d="M25 34v10" stroke="#3a9b28" strokeWidth="2.500" /><path d="M25 20v14" stroke="#000" strokeWidth="2" strokeDasharray="3 2" /><path d="M21 2h8v8h4l-8 9-8-9h4z" fill="#fff" stroke="#000" strokeWidth="2" /></g> },
];

const tabs: [string, string][] = [
  ["Sta...", "w-[81px]"],
  ["CPl...", "w-[57px]"],
  ["Set...", "w-[80px]"],
  ["Di...", "w-[91px]"],
  ["Se...", "w-[69px]"],
  ["Viewp...", "w-[113px]"],
  ["Vis...", "w-[78px]"],
  ["Tra...", "w-[86px]"],
  ["Curv...", "w-[93px]"],
  ["Surfa...", "w-[101px]"],
  ["Soli...", "w-[89px]"],
  ["Sub...", "w-[92px]"],
  ["Mes...", "w-[91px]"],
  ["Rend...", "w-[98px]"],
  ["Dr...", "w-[76px]"],
  ["Ne...", "w-[62px]"],
];

function Dots({ vertical = false, n = 4 }: { vertical?: boolean; n?: number }) {
  return (
    <span className={`flex items-center gap-1.5 ${vertical ? "flex-col" : ""}`}>
      {Array.from({ length: n }, (_, i) => (
        <span key={i} className="h-1.5 w-1.5 rounded-full border-2 border-[#a6a6a6]" />
      ))}
    </span>
  );
}

function Gear() {
  return (
    <button type="button" aria-label="Options" className="text-[24px] text-[#bfbfc1]">
      <FaCog />
    </button>
  );
}

function ModelToolbar() {
  return (
    <div className="flex h-[95px] shrink-0 gap-px pl-1.5">
      <div className="flex w-[27px] shrink-0 items-center justify-center rounded-l-xl bg-[#ececec]">
        <Dots vertical />
      </div>
      <div className="flex min-w-0 flex-1 flex-col">
        <nav className="flex h-[41px] items-center pl-[22px] text-[21px] text-[#6c6c6e]">
          {tabs.map(([t, w]) =>
            t === "Set..." ? (
              <button key={t} type="button" className={`${w} h-full shrink-0 rounded-t-xl bg-[#ececec] pl-5 text-left text-[#222]`}>
                {t}
              </button>
            ) : (
              <button key={t} type="button" className={`${w} ${t === "Di..." ? "pl-5" : ""} shrink-0 text-left whitespace-nowrap`}>
                {t}
              </button>
            )
          )}
          <span className="mr-1 ml-auto flex">
            <Gear />
          </span>
        </nav>
        <div className="flex h-[54px] items-center bg-[#ececec]">
          {toolbar.map((t, i) =>
            t ? (
              <button key={t.name} type="button" aria-label={t.name} className="flex w-14 shrink-0 justify-center [&>svg]:overflow-visible">
                <I48>{t.art}</I48>
              </button>
            ) : (
              <span key={i} className="flex h-full w-2.5 shrink-0 justify-center">
                <span className="w-0.5 bg-[#c3c9da]" />
              </span>
            )
          )}
          <svg viewBox="0 0 20 20" className="mr-3 ml-auto h-5 w-5" fill="none" aria-hidden="true">
            <path d="M3 3l6 7-6 7M11 3l6 7-6 7" stroke="#fff" strokeWidth="2" />
          </svg>
        </div>
      </div>
    </div>
  );
}

/* ---------- tool palette ---------- */

const B = "url(#blueFill)";
const G = "url(#greyFill)";
const Box = ({ x, y, f = B, s = 12 }: { x: number; y: number; f?: string; s?: number }) => (
  <rect x={x - s / 2} y={y - s / 2} width={s} height={s} fill={f} stroke="#000" strokeWidth="2" />
);

const jigsaw = "M0 0h5q-3-6 3-6t3 6h6v6q6-3 6 3t-6 3v6h-6q3-6-3-6t-3 6H0v-6q-6 3-6-3t6-3z";

const palette: { name: string; flyout?: boolean; art: React.ReactNode }[] = [
  { name: "Select", art: <path d="M19 12v27l6-5.500L32 45l4-2-5.500-11.500H38z" fill="#fff" strokeWidth="1.800" /> },
  { name: "Point", flyout: true, art: <circle cx="27.500" cy="27" r="4" fill="#fff" /> },
  { name: "Polyline", flyout: true, art: <g><path d="M15 42l10-26 18 20" /><Sq x={15} y={42} /><Sq x={25} y={16} /><Sq x={43} y={36} /></g> },
  { name: "Curve", flyout: true, art: <g><path d="M14 16C53 6 53 52 14 40" /><Sq x={14} y={16} /><Sq x={14} y={40} /><Sq x={42} y={10} /><Sq x={46} y={44} /></g> },
  { name: "Circle", flyout: true, art: <g><circle cx="27" cy="27" r="18.500" /><path d="M28 26l12-12" stroke="#888" /><Sq x={28} y={26} /><Sq x={40} y={14} /></g> },
  { name: "Ellipse", flyout: true, art: <g><ellipse cx="28" cy="30" rx="19" ry="13" /><path d="M28 30V17M28 30h18" stroke="#888" /><Sq x={28} y={30} /><Sq x={28} y={16} /><Sq x={46} y={30} /></g> },
  { name: "Arc", flyout: true, art: <g><path d="M15 12v32l28-16" stroke="#888" /><path d="M15 12q18 0 28 16" /><Sq x={15} y={12} /><Sq x={43} y={28} /><Sq x={15} y={44} /></g> },
  { name: "Rectangle", flyout: true, art: <g><rect x="12" y="17" width="33" height="22" /><Sq x={44} y={18} /><Sq x={13} y={38} /></g> },
  { name: "Polygon", flyout: true, art: <g><path d="M11 27l8-14h17l7 14-7 14H19z" /><path d="M28 26h14" stroke="#888" /><Sq x={28} y={26} /><Sq x={42} y={26} /></g> },
  { name: "Fillet", flyout: true, art: <g><path d="M13 11h33v30" stroke="#888" /><path d="M13 12h10q21 0 22 30" strokeWidth="4" /><Sq x={13} y={12} /><Sq x={45} y={42} /></g> },
  { name: "Surface", flyout: true, art: <g><path d="M21 12h24L35 43 13 34z" fill={B} /><path d="M33 12L24 39M17 23l23 5" stroke="#334" /><Sq x={21} y={12} /><Sq x={45} y={12} /><Sq x={35} y={44} /><Sq x={13} y={34} /></g> },
  { name: "Blend", flyout: true, art: <g><path d="M11 18L24 9q20 2 21 16v13l-14 9V34Q30 20 11 18z" fill="#fff" /><path d="M22 20L34 12q11 4 11 14l-14 9q0-10-9-15z" fill={B} stroke="none" /><path d="M11 18L24 9q20 2 21 16v13l-14 9V34Q30 20 11 18z" /></g> },
  { name: "Box", flyout: true, art: <g><path d="M26 8l18 6v20L31 45l-20-7V15z" fill="#6a80f4" /><path d="M31 21l13-7v20L31 45z" fill="#3040a8" stroke="none" /><path d="M26 8l18 6-13 7-20-6z" fill="#bcc7f8" stroke="none" /><path d="M26 8l18 6v20L31 45l-20-7V15z" /></g> },
  { name: "Spheres", flyout: true, art: <g><circle cx="36" cy="20" r="13.500" fill="url(#blueBall)" /><path d="M31 8q-3 12 1 25M23 20q14 6 26 1" stroke="#223" /><circle cx="21" cy="35" r="13.500" fill="url(#blueBall)" /><path d="M17 23q-3 12 1 24M8 35q13 5 26 1" stroke="#223" /></g> },
  { name: "Project", flyout: true, art: <g><ellipse cx="29" cy="12" rx="11" ry="4.500" fill="#fff" /><path d="M8 22q21 9 43 0v21q-21 10-43 0z" fill={B} /><ellipse cx="29" cy="38" rx="11" ry="5" stroke="#fff" strokeWidth="4" /></g> },
  { name: "Mesh", flyout: true, art: <g><path d="M27 9q9 6 24 8-4 16-19 30-10-6-23-9 12-10 18-29z" fill={B} /><path d="M39 14q-6 18-18 28M22 19q10 6 24 9M16 29q10 6 23 9M27 9l12 5-17 5 24 9-30 1 23 9" stroke="#225" strokeWidth="1.500" /></g> },
  { name: "Join", flyout: true, art: <g><path d={jigsaw} transform="translate(15 9) rotate(25)" fill="url(#jigsawFill)" strokeWidth="1.800" /><path d={jigsaw} transform="translate(34 26) rotate(25)" fill="#fff" strokeWidth="1.800" /></g> },
  { name: "Explode", art: <path d="M7 29l8-18 2 25L43 10 29 40l21-1-18 8 5 3H7z" fill="url(#flameFill)" strokeWidth="1.800" /> },
  { name: "Trim", art: <g><rect x="8" y="27" width="20" height="10" fill="#fff" /><path d="M34 29l13 12-7 7-12-11z" fill="#fff" stroke="#333" /><path d="M28 10h13L29 37h-1z" fill="#14246e" stroke="none" /></g> },
  { name: "Split", art: <g><rect x="10" y="31" width="37" height="10" fill="#fff" /><path d="M30 14h14L31 42h-1z" fill="#14246e" stroke="none" /></g> },
  { name: "Group", flyout: true, art: <g><g fill="#000"><circle cx="28" cy="21" r="10" /><circle cx="21" cy="33" r="10" /><circle cx="36" cy="33" r="10" /></g><g stroke="none"><circle cx="21" cy="32" r="7" fill="#fff" /><circle cx="36" cy="32" r="7" fill="#16266f" /><circle cx="28" cy="22" r="7" fill="#6a80f4" /></g></g> },
  { name: "Ungroup", art: <g><circle cx="28" cy="20" r="7" fill="#6a80f4" /><circle cx="18" cy="36" r="7" fill="#fff" /><circle cx="38" cy="36" r="7" fill="#16266f" /></g> },
  { name: "Edit points", art: <g><path d="M8 19q32-5 31 30" strokeWidth="4" stroke="#222" /><Sq x={19} y={18} /><Sq x={39} y={38} /></g> },
  { name: "Control points", flyout: true, art: <g><path d="M9 19q35-4 30 30" strokeWidth="4" /><path d="M8 11h12M29 15l18 16M47 40v10" strokeDasharray="2 3" /><Sq x={24} y={10} /><Sq x={48} y={34} /></g> },
  { name: "Text", art: <text x="28" y="43" fontSize="50" fontWeight="bold" textAnchor="middle" fontFamily="Liberation Serif" fill="#5f78f0" strokeWidth="1.800">T</text> },
  { name: "Move", flyout: true, art: <g><Box x={18} y={39} f={G} /><Box x={42} y={15} /><path d="M25 33l9-9M26 22h9v9" /></g> },
  { name: "Copy", art: <g><Box x={18} y={15} /><Box x={18} y={39} f={G} /><Box x={42} y={21} /><Box x={34} y={27} /><Box x={42} y={43} /></g> },
  { name: "Rotate", art: <g><rect x="8" y="9" width="11" height="28" fill={G} /><path d="M44 19l7 6-21 21-7-7z" fill={B} /><path d="M20 13q12-1 17 8M30 20l8 1V13" /></g> },
  { name: "Boolean", flyout: true, art: <g><path d="M26 8l18 6v22L31 47l-20-7V15z" fill="#6a80f4" /><path d="M31 21l13-7v20l-13 4z" fill="#3040a8" stroke="none" /><path d="M26 8l18 6-13 7-20-6z" fill="#bcc7f8" stroke="none" /><path d="M22 31l9 3 9-4v11l-9 5-9-4z" fill="#ddd" stroke="#333" strokeWidth="1" /><path d="M26 8l18 6v22L31 47l-20-7V15z" /></g> },
  { name: "Extrude", flyout: true, art: <g><path d="M17 31h33l-9 10H7z" fill={B} /><path d="M16 35V16M28 35V16M40 35V16" stroke="#fff" strokeWidth="4" /><path d="M11 18l5-8 5 8zM23 18l5-8 5 8zM35 18l5-8 5 8z" fill="#fff" stroke="none" /></g> },
  { name: "Array", flyout: true, art: <g>{[12, 26, 40].map((y) => [14, 28, 42].map((x) => <Box key={`${x}${y}`} x={x + 1} y={y} s={8} f={x === 14 && y === 40 ? "#fff" : B} />))}</g> },
  { name: "Align", flyout: true, art: <g><rect x="20" y="9" width="18" height="9" fill={G} /><rect x="24" y="22" width="10" height="8" fill={G} /><rect x="22" y="34" width="14" height="12" fill={G} /><path d="M29 6v42" stroke="#b22a26cc" strokeWidth="4" /></g> },
  { name: "Shear", flyout: true, art: <g><path d="M11 15l6-4 7 3v28l-7 3-6-4z" fill={G} /><path d="M25 12l3-6 8 4-6 8" fill="#eee" /><path d="M32 16l6-4 8 4-12 28-4 2-9-4z" fill={B} /></g> },
  { name: "Stretch", flyout: true, art: <g><path d="M10 17l4 13h9l-2 15M14 24h18l14-3-4 10 8 14" stroke="#222" strokeWidth="4" /><rect x="22" y="6" width="6" height="42" fill="#a9b9f6" strokeWidth="1.500" /><circle cx="8" cy="17" r="4" fill="#222" /><circle cx="37" cy="16" r="4" fill="#222" /></g> },
  { name: "Check", flyout: true, art: <path d="M10 32l8-3 3 6Q32 17 49 9 33 24 21 45z" fill="#000" strokeWidth="1" /> },
  { name: "Solids", flyout: true, art: <g><path d="M11 20l10-8 14 5v14l-12 7-12-4z" fill={G} /><path d="M11 20l13 3 11-6M24 23v15" strokeWidth="1" /><path d="M39 16l10 21q-10 8-20 0z" fill={G} /></g> },
  { name: "Pyramid", flyout: true, art: <g><g transform="translate(2 4)">{pointer}</g><path d="M27 20l17 16-13 11-20-7z" fill="#f7dd84" /><path d="M27 20l17 16-13 11z" fill="#b79236" stroke="none" /><path d="M27 20l17 16-13 11-20-7z" /></g> },
];

function Palette() {
  return (
    <div className="ml-2 grid w-56 grid-cols-4">
      {palette.map((p) => (
        <button key={p.name} type="button" aria-label={p.name} className="h-14 w-14">
          <svg viewBox="0 0 56 56" className="h-14 w-14" fill="none" stroke="#000" strokeWidth="2" aria-hidden="true">
            {p.art}
            {p.flyout && <path d="M56 45v11H43z" fill="#666" stroke="none" />}
          </svg>
        </button>
      ))}
    </div>
  );
}

const CHECK =
  "h-6 w-6 shrink-0 appearance-none rounded-md border border-[#cfcfd1] bg-white shadow-[inset_0_1px_2px_#0001] checked:bg-[#8a1f96]";

function OSnap() {
  return (
    <section className="flex flex-1 flex-col overflow-hidden rounded-t-xl bg-[#ececec]">
      <header className="flex h-10 items-center justify-between px-2 pb-0.5 text-[25px] text-[#8d8d8f]">
        <h2>OSnap</h2>
        <Gear />
      </header>
      <div className="flex h-[42px] border-t-2 border-[#d8d9dd] bg-[#ececec]">
        <button type="button" aria-label="Object snaps" className="grid w-[72px] place-items-center bg-[#ececec]">
          <svg viewBox="0 0 36 32" className="h-8 w-9" fill="none" aria-hidden="true">
            <circle cx="16" cy="16" r="13" stroke="#777" strokeWidth="2" />
            <path d="M16 17h18" stroke="#000" strokeWidth="2" />
            <Sq x={16} y={17} />
          </svg>
        </button>
        <div className="flex-1 rounded-bl-xl bg-[#d8d9dd] pl-[18px]">
          <button type="button" aria-label="Selection filter" className="grid h-full place-items-center">
            <svg viewBox="0 0 36 32" className="h-8 w-9" fill="none" aria-hidden="true">
              <path d="M8 6q10-4 20 0l-8 9v11l-5 3V15z" fill="url(#greyFill)" stroke="#222" strokeWidth="2" />
              <path d="M27 2h5v5M4 24v5h5" stroke="#000" strokeWidth="2" />
            </svg>
          </button>
        </div>
      </div>
      <div className="flex flex-col pt-[15px] pl-7 text-[22px] leading-[30px] text-[#222]">
        {["End", "Near", "Point", "Mid", "Cen", "Int", "Perp", "Tan", "Quad", "Knot", "Vertex", "Project"].map((n) => (
          <label key={n} className="flex h-[30px] items-center gap-2">
            <input type="checkbox" className={CHECK} />
            {n}
          </label>
        ))}
        <label className="mt-[34px] flex h-[30px] items-center gap-2">
          <input type="checkbox" className={CHECK} />
          Disable
        </label>
      </div>
    </section>
  );
}

/* ---------- 3D viewport ---------- */

/* Maps the unit square onto the ground plane's outline. */
const quad = [
  [250, 610],
  [1157, 583],
  [1514, 962],
  [229, 1022],
];
function project(u: number, v: number): [number, number] {
  const [[x0, y0], [x1, y1], [x2, y2], [x3, y3]] = quad;
  const dx1 = x1 - x2, dx2 = x3 - x2, sx = x0 - x1 + x2 - x3;
  const dy1 = y1 - y2, dy2 = y3 - y2, sy = y0 - y1 + y2 - y3;
  const det = dx1 * dy2 - dx2 * dy1;
  const g = (sx * dy2 - dx2 * sy) / det;
  const h = (dx1 * sy - sx * dy1) / det;
  const w = g * u + h * v + 1;
  return [
    ((x1 - x0 + g * x1) * u + (x3 - x0 + h * x3) * v + x0) / w,
    ((y1 - y0 + g * y1) * u + (y3 - y0 + h * y3) * v + y0) / w,
  ];
}
function gridPath(n: number) {
  let d = "";
  for (let i = 0; i <= n; i++) {
    const t = i / n;
    d += `M${project(t, 0).join(" ")}L${project(t, 1).join(" ")}M${project(0, t).join(" ")}L${project(1, t).join(" ")}`;
  }
  return d;
}
const minorGrid = gridPath(140);
const majorGrid = gridPath(28);

function Scene() {
  const letters = "Assembly is good.".split("");
  return (
    <svg className="absolute inset-0 h-full w-full" aria-label="Phone stand model">
      <defs>
        <linearGradient id="ringSide" x1="0" y1="0" x2="1" y2="0">
          <stop offset="0" stopColor="#38862a" />
          <stop offset=".3" stopColor="#347c23" />
          <stop offset=".55" stopColor="#2c6a1c" />
          <stop offset=".72" stopColor="#1c4410" />
          <stop offset=".85" stopColor="#2f6d1d" />
          <stop offset="1" stopColor="#1f4c13" />
        </linearGradient>
        <linearGradient id="ringShade" x1="0" y1="0" x2="0" y2="1">
          <stop offset=".5" stopColor="#000" stopOpacity="0" />
          <stop offset="1" stopColor="#0a2205" stopOpacity=".6" />
        </linearGradient>
        <linearGradient id="ringInner" x1="0" y1="0" x2="1" y2="0">
          <stop offset="0" stopColor="#28601c" />
          <stop offset=".35" stopColor="#17330f" />
          <stop offset="1" stopColor="#245818" />
        </linearGradient>
        <linearGradient id="phoneFace" x1="0" y1="0" x2="1" y2="1">
          <stop offset="0" stopColor="#8f8f8f" />
          <stop offset=".4" stopColor="#999" />
          <stop offset="1" stopColor="#7c7c7c" />
        </linearGradient>
        <linearGradient id="phoneTop" x1="0" y1="0" x2="1" y2="1">
          <stop offset="0" stopColor="#b6b6b6" />
          <stop offset="1" stopColor="#9a9a9a" />
        </linearGradient>
        <linearGradient id="phoneCorner" x1="0" y1="0" x2="0" y2="1">
          <stop offset="0" stopColor="#b0b0b0" />
          <stop offset=".5" stopColor="#a6a6a6" />
          <stop offset="1" stopColor="#858585" />
        </linearGradient>
      </defs>
      <g transform="translate(92 222) scale(.3333 .4591)">
        <path d="M250 610L1157 583 1514 962 229 1022z" fill="#f1f1f1" />
        <path d={minorGrid} stroke="#8c8c8c" strokeWidth="1" fill="none" opacity=".75" />
        <path d={majorGrid} stroke="#555" strokeWidth="2" fill="none" />
        <path d="M645 680l20 50M745 914h40M865 945l20 46" stroke="#a02b2b" strokeWidth="4" fill="none" />
        <path d="M1180 744l122-6" stroke="#4c9a3c" strokeWidth="4" />
        {/* stand */}
        <path
          fillRule="evenodd"
          d="M645 542C480 560 392 620 391 690C392 780 425 835 470 860C560 900 680 912 790 914L950 904C1060 890 1130 855 1158 810C1185 760 1200 640 1170 595L1140 545 900 540z M555 715C600 690 650 680 690 675L735 748C670 745 590 735 555 715z"
          fill="url(#ringSide)"
        />
        <path
          d="M391 690C392 780 425 835 470 860C560 900 680 912 790 914L950 904C1060 890 1130 855 1158 810C1185 760 1200 640 1170 595L1000 700 742 790C560 795 400 760 391 690z"
          fill="url(#ringShade)"
        />
        <path
          fillRule="evenodd"
          d="M650 542C480 560 391 620 391 690C410 760 560 795 742 787L735 748C640 752 480 730 474 675C480 620 570 575 660 565z"
          fill="#459a2e"
        />
        <path d="M660 568C570 580 512 620 510 668C512 690 530 705 555 715C600 690 650 680 692 675z" fill="url(#ringInner)" />
        <path d="M474 675C480 620 570 575 660 565L656 573C570 590 514 622 510 670C520 715 630 742 735 748 640 752 480 730 474 675z" fill="#459a2e" />
        <path d="M660 565C570 575 480 620 474 678C480 730 600 758 705 747M655 572C570 590 515 620 510 672C520 720 640 740 735 748" stroke="#000" strokeWidth="6" fill="none" />
        <path d="M555 715C600 690 650 680 692 675" stroke="#000" strokeWidth="3" fill="none" />
        <path d="M655 568v32" stroke="#000" strokeWidth="7" />
        <path d="M391 690C410 760 560 795 742 787" stroke="#2e7a1d" strokeWidth="2" fill="none" />
        {/* phone */}
        <path d="M765 48L860 66 1225 322Q1240 345 1222 388L935 940Q915 952 850 944L800 938 622 500 752 60z" fill="#8a8a8a" />
        <path d="M765 48L860 66 1226 326 1078 303z" fill="url(#phoneTop)" stroke="#888" />
        <path d="M1078 303L1226 326Q1242 350 1222 390L1068 366z" fill="url(#phoneCorner)" />
        <path d="M1068 366L1222 389 945 935 810 922z" fill="#6c6c6c" />
        <path d="M800 938L812 920 946 934Q930 950 905 948z" fill="#505050" />
        <path d="M752 58Q760 44 772 56L1072 298Q1084 315 1072 355L812 922Q804 946 790 930L624 510Q620 495 626 478z" fill="url(#phoneFace)" />
        <path d="M757 76L1056 345 800 908 628 487z" stroke="#6b3535" strokeWidth="3" fill="none" strokeLinejoin="round" />
        <ellipse cx="696" cy="310" rx="10" ry="29" transform="rotate(8 696 310)" fill="#555" />
      </g>
      <text transform="translate(377 689) rotate(73)" fontFamily="Liberation Sans" fontStyle="italic" fill="#000">
        {letters.map((c, i) => (
          <tspan key={i} fontSize={26 + Math.round(i * 0.75)}>
            {c}
          </tspan>
        ))}
      </text>
      <path d="M72 1378v46l60-4M72 1424l7 43" fill="none" stroke="#555" strokeWidth="1.500" />
      <g fontFamily="Liberation Sans" fontSize="28" fill="#555">
        <text x="78" y="1379">z</text>
        <text x="136" y="1420">y</text>
        <text x="84" y="1468">x</text>
      </g>
    </svg>
  );
}

function Viewport() {
  return (
    <main className="flex min-w-0 flex-1 flex-col bg-white">
      <div className="relative flex-1 overflow-hidden">
        <Scene />
        <div className="relative flex gap-0.5 pt-0.5 pl-0.5 text-white">
          <button type="button" className="h-[38px] w-[159px] bg-[#919191] text-center text-[24px] font-bold">
            Perspective
          </button>
          <button type="button" aria-label="Viewport menu" className="grid h-[38px] w-[31px] place-items-center bg-[#919191]">
            <svg viewBox="0 0 16 10" className="h-2.5 w-4" aria-hidden="true">
              <path d="M0 1h16l-8 8z" fill="#fff" />
            </svg>
          </button>
        </div>
      </div>
      <nav className="flex h-[52px] shrink-0 items-center overflow-hidden bg-[#f0f0f0] pb-1 pl-5 text-[25px] whitespace-nowrap text-[#6d6d6f]">
        <button type="button" aria-label="Four views" className="mr-[34px]">
          <svg viewBox="0 0 30 28" className="h-7 w-[30px]" fill="none" stroke="#7d7d7d" strokeWidth="2" aria-hidden="true">
            <path d="M1 1h28v26H1zM15 1v26M1 14h28M3 5h4M17 5h4M3 18h4M17 18h4" />
          </svg>
        </button>
        <button type="button" aria-label="Single view" className="mr-7">
          <svg viewBox="0 0 30 28" className="h-7 w-[30px]" fill="none" stroke="#86358f" strokeWidth="1.500" aria-hidden="true">
            <path d="M1 1h28v26H1zM1 4h6" />
          </svg>
        </button>
        <span className="h-7 w-0.5 bg-[#777]" />
        <button type="button" className="px-[39px] text-[#86358f]">
          Perspective
        </button>
        <span className="h-7 w-0.5 bg-[#777]" />
        <button type="button" className="px-10">
          Top
        </button>
        <span className="h-7 w-0.5 bg-[#777]" />
        <button type="button" className="pl-9">
          Front
        </button>
      </nav>
    </main>
  );
}

/* ---------- properties panel ---------- */

function Row({ label, id, className = "h-[54px]", children }: { label: string; id: string; className?: string } & Kids) {
  return (
    <div className={`${className} flex items-center justify-end gap-[21px]`}>
      <label htmlFor={id}>{label}</label>
      <div className="flex w-[226px] items-center gap-[7px]">{children}</div>
    </div>
  );
}

function Stepper({ off = false }: { off?: boolean }) {
  return (
    <span className={`grid h-8 w-[23px] shrink-0 grid-rows-2 overflow-hidden rounded-lg bg-white shadow-[0_1px_2px_#0004] ${off ? "opacity-50" : ""}`}>
      <button type="button" aria-label="Increase" disabled={off} className="grid place-items-center border-b border-[#ccc]">
        <svg viewBox="0 0 12 8" className="h-2 w-3" fill="none" aria-hidden="true">
          <path d="M1 6l5-4 5 4" stroke="#222" strokeWidth="2.500" />
        </svg>
      </button>
      <button type="button" aria-label="Decrease" disabled={off} className="grid place-items-center border-t border-[#ccc]">
        <svg viewBox="0 0 12 8" className="h-2 w-3" fill="none" aria-hidden="true">
          <path d="M1 2l5 4 5-4" stroke="#222" strokeWidth="2.500" />
        </svg>
      </button>
    </span>
  );
}

function Num({ label, id, value, off = false }: { label: string; id: string; value: string; off?: boolean }) {
  return (
    <Row label={label} id={id}>
      <input
        id={id}
        defaultValue={value}
        disabled={off}
        className="h-[34px] min-w-0 flex-1 border border-b-2 border-[#d8d8d8] border-b-[#b9b9b9] bg-white pl-[7px] text-[#222] disabled:bg-[#f4f4f4] disabled:text-[#bdbdbd]"
      />
      <Stepper off={off} />
    </Row>
  );
}

function Pick({ label, id, value }: { label: string; id: string; value: string }) {
  return (
    <Row label={label} id={id} className="h-12">
      <span className="relative block w-full">
        <select id={id} className="block h-8 w-full appearance-none rounded-lg bg-white pl-3 text-[22px] leading-none shadow-[0_1px_2px_#0005]">
          <option>{value}</option>
        </select>
        <svg viewBox="0 0 12 18" className="pointer-events-none absolute top-[7px] right-2.5 h-[18px] w-3" fill="none" aria-hidden="true">
          <path d="M2 7l4-5 4 5M2 11l4 5 4-5" stroke="#222" strokeWidth="2" />
        </svg>
      </span>
    </Row>
  );
}

function Properties() {
  return (
    <section className="flex h-[774px] shrink-0 flex-col overflow-hidden rounded-tl-xl bg-[#ececec]">
      <header className="flex h-[29px] shrink-0 items-center border-b-2 border-[#d8d9dd] pr-1">
        <span className="flex flex-1 justify-center pl-6">
          <Dots />
        </span>
        <Gear />
      </header>
      <div className="flex min-h-0 flex-1">
        <div className="min-w-0 flex-1 pr-6 pl-4 text-[22px] text-[#222]">
          <div className="flex h-[58px] items-center justify-center gap-3 pr-3">
            <button type="button" aria-label="Camera properties" className="bg-white">
              <I48>{camera}</I48>
            </button>
            <button type="button" aria-label="Viewport properties">
              <I48>
                <rect x="1" y="2" width="46" height="43" fill="#ddd" stroke="#222" strokeWidth="2" />
                <rect x="5" y="8" width="38" height="30" stroke="#5bb4ee" strokeWidth="3" />
                <rect x="9" y="12" width="30" height="22" fill="#fff" stroke="#d8261b" strokeWidth="2.500" />
              </I48>
            </button>
            <button type="button" aria-label="Object properties">
              <I48>
                <circle cx="38" cy="11" r="8" fill="url(#navyBall)" stroke="#445" strokeWidth="2" />
                <circle cx="28" cy="20" r="9" fill="url(#navyBall)" stroke="#222" strokeWidth="2" />
                <circle cx="15" cy="32" r="11" fill="url(#navyBall)" stroke="#111" strokeWidth="2.500" />
              </I48>
            </button>
          </div>
          <h2 className="mt-[25px] ml-1 h-8 leading-8">Viewport</h2>
          <div className="mt-1.5">
            <Row label="Title" id="title">
              <input id="title" defaultValue="Perspective" className="mr-0.5 h-[34px] min-w-0 flex-1 border border-b-2 border-[#d8d8d8] border-b-[#b9b9b9] bg-white pl-[7px]" />
            </Row>
            <Num label="Width" id="vw" value="600" off />
            <Num label="Height" id="vh" value="1496" off />
            <Pick label="Projection" id="proj" value="Perspective" />
            <Pick label="Display mode" id="mode" value="Wireframe" />
            <Row label="Locked" id="locked" className="h-11">
              <input id="locked" type="checkbox" className={CHECK} />
            </Row>
          </div>
          <hr className="mt-[26px] border-t-2 border-[#cfcfd1]" />
          <h2 className="mt-4 ml-1 h-8 leading-8">Camera</h2>
          <div className="mt-1.5">
            <Num label="Lens Length (mm)" id="lens" value="30.0" />
            <Num label="Rotation" id="rot" value="0.0" />
            <Num label="X Location" id="xl" value="260.545" />
            <Num label="Y Location" id="yl" value="-48.706" />
            <Num label="Z Location" id="zl" value="145.874" />
          </div>
        </div>
        <aside className="flex w-9 shrink-0 flex-col">
          <button type="button" aria-label="Materials" className="grid h-[73px] place-items-center">
            <span className="grid h-7 w-7 place-items-center rounded-full border-2 border-black bg-[conic-gradient(#f33,#fa3,#ee3,#3d3,#3ee,#36f,#c3f,#f33)]">
              <span className="h-3.5 w-3.5 rounded-full bg-[#ececec]" />
            </span>
          </button>
          <div className="flex flex-1 flex-col items-center rounded-tl-xl bg-[#d8d9dd] pt-5">
            <button type="button" aria-label="Display" className="mb-10">
              <svg viewBox="0 0 32 32" className="h-8 w-8" aria-hidden="true">
                <rect x="2" y="3" width="28" height="21" fill="url(#greyFill)" stroke="#111" strokeWidth="3" />
                <path d="M13 25h6l3 5H10z" fill="#222" />
              </svg>
            </button>
            <button type="button" aria-label="Help">
              <svg viewBox="0 0 32 32" className="h-8 w-8" aria-hidden="true">
                <rect x="2" y="2" width="28" height="28" fill="#fff" stroke="#111" strokeWidth="2" />
                <path d="M2 5h28" stroke="#3c49a8" strokeWidth="4" />
                <path d="M4 27V20a12 11 0 0 1 24 0v7z" fill="#4660d8" />
                <text x="16" y="26" fontSize="20" fontWeight="bold" textAnchor="middle" fontFamily="Liberation Serif" fill="#fff">?</text>
              </svg>
            </button>
          </div>
        </aside>
      </div>
    </section>
  );
}

/* ---------- layers panel ---------- */

const layerTools: Tool[] = [
  { name: "New layer", art: <g><path d="M3 3l25 4v12L14 30 5 24z" fill="#fff" stroke="#111" strokeWidth="2" /><path d="M5 5l22 3-1 9-10 5z" fill="#ee7a4c" /><path d="M5 16l9 11" stroke="#4a66e2" strokeWidth="3" /><path d="M16 22h14M23 15v14" stroke="#fff" strokeWidth="8" /><path d="M17 22h12M23 16v12" stroke="#000" strokeWidth="4" /></g> },
  { name: "New sublayer", art: <g fill="#e4e4e4" stroke="#a9a9a9" strokeWidth="2"><path d="M2 2l14 3v9l-8 4-6-5zM14 13l15 4v9l-8 5-7-5z" /><path d="M3 19v9h9M9 25l4 3-4 3" fill="none" /></g> },
  { name: "Delete", art: <path d="M3 5l2-2 11 11L27 3l2 2-11 11 11 11-2 2-11-11L5 29l-2-2 11-11z" fill="#ddd" stroke="#a0a0a0" strokeWidth="1.500" /> },
  { name: "Duplicate", art: <g stroke="#a9a9a9" strokeWidth="2"><path d="M9 28Q-1 20 4 9 11-1 20 6l-4 1" /><path d="M9 9l20 5v11l-9 5-11-5z" fill="#e2e2e2" /></g> },
  { name: "Move up", art: <path d="M16 6l13 15H3z" fill="#dadada" stroke="#a0a0a0" strokeWidth="2" /> },
  { name: "Move down", art: <path d="M3 8h26L16 25z" fill="#dadada" stroke="#a0a0a0" strokeWidth="2" /> },
  { name: "Move out", art: <path d="M23 2v28L8 16z" fill="#dadada" stroke="#a0a0a0" strokeWidth="2" /> },
  { name: "Filter", art: <g><path d="M3 2h26v2L19 17v13h-5V17L3 4z" fill="#3f62d4" stroke="#152a6c" strokeWidth="2" /><path d="M7 5l8 10v12" stroke="#b8c8ff" strokeWidth="2" /></g> },
  { name: "Columns", art: <g stroke="#333" strokeWidth="1.500"><rect x="4" y="2" width="24" height="28" fill="#f4f4f4" /><rect x="4" y="2" width="24" height="4" fill="#444" /><path d="M10 6v24M16 6v24M22 6v24M4 13h24M4 21h24" /></g> },
  { name: "List", art: <path d="M4 6h24M4 16h24M4 26h24" stroke="#dadada" strokeWidth="3" /> },
  { name: "Help", art: <g><circle cx="16" cy="16" r="15" fill="url(#helpFill)" /><text x="16" y="25" fontSize="28" fontWeight="bold" textAnchor="middle" fontFamily="Liberation Serif" fill="#fff">?</text></g> },
];

function Layers() {
  const sep = "relative before:absolute before:top-3 before:left-0 before:h-8 before:w-0.5 before:bg-[#dcdcde]";
  return (
    <section className="flex min-h-0 flex-1 flex-col rounded-tl-xl bg-[#ececec] text-[22px] text-[#222]">
      <header className="flex h-[42px] shrink-0 items-center justify-between border-b-2 border-[#d8d9dd] pr-1 pb-1 pl-2.5 text-[24px] text-[#8d8d8f]">
        <h2>Layers</h2>
        <Gear />
      </header>
      <div className="flex h-[72px] shrink-0 items-center pt-1 pl-4">
        {layerTools.map((t) => (
          <button key={t.name} type="button" aria-label={t.name} className="grid w-11 shrink-0 place-items-center">
            <svg viewBox="0 0 32 32" className="h-8 w-8" fill="none" aria-hidden="true">
              {t.art}
            </svg>
          </button>
        ))}
      </div>
      <div className="mx-[14px] flex h-[41px] shrink-0 items-center gap-3.5 rounded-xl bg-white pl-4 shadow-[0_1px_2px_#0005]">
        <svg viewBox="0 0 28 28" className="h-7 w-7" fill="none" aria-hidden="true">
          <circle cx="11" cy="11" r="10" stroke="#222" strokeWidth="2" />
          <path d="M18 18l8 8" stroke="#222" strokeWidth="3" />
        </svg>
        <input type="search" aria-label="Search layers" placeholder="Search" className="h-full flex-1 bg-transparent text-[25px] outline-none placeholder:text-[#bfbfc1]" />
      </div>
      <div className="mx-4 mt-3 mr-3 mb-4 flex-1 overflow-hidden bg-white">
        <table className="w-full table-fixed border-collapse text-left whitespace-nowrap">
          <thead>
            <tr className="h-[55px] border-b-2 border-[#e2e2e2]">
              <th className="w-[191px] pl-[54px] font-normal">Layer</th>
              <th className={`${sep} w-10`} aria-label="Current" />
              <th className={`${sep} w-10`} aria-label="On" />
              <th className={`${sep} w-10`} aria-label="Locked" />
              <th className={`${sep} w-10`} aria-label="Color" />
              <th className={`${sep} w-40 pl-[5px] font-normal`}>Material</th>
              <th className={`${sep} pl-[5px] font-normal`}>Linetype</th>
            </tr>
          </thead>
          <tbody>
            <tr className="h-14 font-bold">
              <td className="pl-[54px]">Default</td>
              <td>
                <svg viewBox="0 0 28 22" className="ml-2 h-[22px] w-7" fill="none" aria-label="Current layer">
                  <path d="M1 12l8 7L27 2" stroke="#222" strokeWidth="3" />
                </svg>
              </td>
              <td />
              <td />
              <td>
                <span className="ml-[7px] block h-[26px] w-[26px] bg-black" />
              </td>
              <td>
                <span className="ml-[3px] block h-8 w-8 rounded-full border-2 border-[#808080]" />
              </td>
              <td className="overflow-hidden pl-[5px]">Continuous</td>
            </tr>
          </tbody>
        </table>
      </div>
    </section>
  );
}

/* ---------- page ---------- */

export default function App() {
  return (
    <div className="flex h-screen overflow-hidden bg-black">
      <Defs />
      <div className="flex min-w-0 flex-[1400] basis-0 flex-col overflow-hidden bg-[#ececec]">
        <Ribbon />
        <CanvasToolbar />
        <Canvas />
      </div>
      <div className="flex w-6 shrink-0 items-center justify-center pt-4">
        <span className="h-32 w-2 rounded-full bg-[#999]" />
      </div>
      <div className={`${INTER} flex min-w-0 flex-[1446] basis-0 flex-col bg-[#d8d9dd]`}>
        <div className="flex h-[7px] shrink-0 border-b border-[#b5b6b9] bg-[#e1e1e2]">
          <span className="w-1/2" />
          <span className="flex-1 border-l border-[#c5c5c7] bg-[#ededee]" />
        </div>
        <ModelToolbar />
        <div className="flex min-h-0 flex-1 gap-1.5 pt-1.5 pl-1.5">
          <div className="flex w-[252px] shrink-0 flex-col gap-1.5">
            <section className="h-[774px] shrink-0 rounded-t-xl bg-[#ececec]">
              <div className="flex h-7 items-center justify-center border-b-2 border-[#d8d9dd]">
                <Dots />
              </div>
              <div className="px-[18px] pt-[21px] pb-[25px]">
                <input
                  aria-label="Command"
                  placeholder="Command"
                  className="block h-10 w-full border border-b-2 border-[#d6d6d6] border-b-[#b5b5b7] bg-white pl-1.5 text-[24px] placeholder:text-[#bfbfc1]"
                />
              </div>
              <Palette />
            </section>
            <OSnap />
          </div>
          <Viewport />
          <div className="flex w-[40%] shrink-0 flex-col gap-1.5">
            <Properties />
            <Layers />
          </div>
        </div>
        <footer className="mt-1.5 ml-1.5 flex h-[22px] shrink-0 overflow-hidden rounded-tl-xl bg-[#ececec]">
          <div className="flex w-[41px] shrink-0 justify-center border-r-2 border-[#d8d9dd] pt-1.5">
            <Dots vertical n={2} />
          </div>
          <div className={`${ARIAL} flex flex-col justify-end pl-[11px] text-[24px] leading-7 whitespace-nowrap text-[#333]`}>
            <p>Command: _Grasshopper</p>
            <p className="-mb-2.5">Neither the document nor the active object have been set. This Bake operation was pointless.</p>
          </div>
        </footer>
      </div>
    </div>
  );
}
